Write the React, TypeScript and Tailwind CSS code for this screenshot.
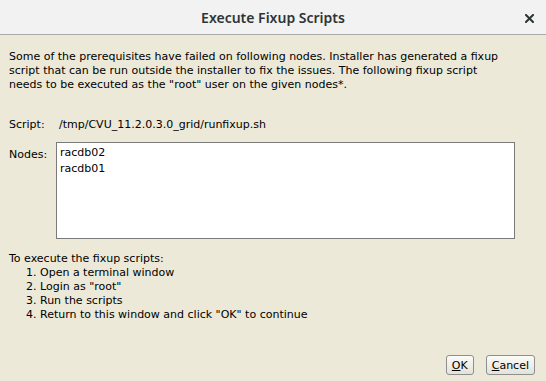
import React from 'react';

const steps = [
  'Open a terminal window',
  'Login as "root"',
  'Run the scripts',
  'Return to this window and click "OK" to continue',
];

const DlgButton = ({ mnemonic, rest }: { mnemonic: string; rest: string }) => (
  <button className="h-[20px] px-[5px] border border-[#8e8f8f] rounded-[3px] bg-gradient-to-b from-[#fbfbf8] to-[#e4e2d8] text-[11px] leading-none text-black">
    <span className="underline">{mnemonic}</span>
    {rest}
  </button>
);

export default function App() {
  return (
    <div className="w-[546px] h-[381px] flex flex-col bg-[#ece9d8] font-['DejaVu_Sans',sans-serif] text-black overflow-hidden">
      {/* Title bar */}
      <div className="h-[35px] shrink-0 flex items-center bg-[#f2f2f2] border-b border-[#a9a9a7] relative">
        <div className="flex-1 text-center font-['Noto_Sans',sans-serif] font-semibold text-[14px] text-[#2e3436]">
          Execute Fixup Scripts
        </div>
        <svg className="absolute right-[12px] top-[14px]" width="9" height="9" viewBox="0 0 9 9">
          <path d="M1 1 L8 8 M8 1 L1 8" stroke="#2e3436" strokeWidth="2" strokeLinecap="square" />
        </svg>
      </div>

      {/* Body */}
      <div className="flex-1 flex flex-col px-[9px] pt-[15px] text-[11px] leading-[14px]">
        <p>
          Some of the prerequisites have failed on following nodes. Installer has generated a fixup
          <br />
          script that can be run outside the installer to fix the issues. The following fixup script
          <br />
          needs to be executed as the "root" user on the given nodes*.
        </p>

        <div className="flex mt-[26px]">
          <span className="w-[50px]">Script:</span>
          <span>/tmp/CVU_11.2.0.3.0_grid/runfixup.sh</span>
        </div>

        <div className="flex mt-[10px]">
          <span className="w-[47px] pt-[6px]">Nodes:</span>
          <div className="w-[459px] h-[97px] bg-white border border-[#7a7a7a] px-[3px] pt-[2px] text-[11px] leading-[16px]">
            <div>racdb02</div>
            <div>racdb01</div>
          </div>
        </div>

        <div className="mt-[13px]">
          <div>To execute the fixup scripts:</div>
          {steps.map((s, i) => (
            <div key={i} className="pl-[17px]">
              {i + 1}. {s}
            </div>
          ))}
        </div>

        <div className="mt-auto mb-[6px] flex justify-end gap-[12px] pr-[2px]">
          <DlgButton mnemonic="O" rest="K" />
          <DlgButton mnemonic="C" rest="ancel" />
        </div>
      </div>
    </div>
  );
}
